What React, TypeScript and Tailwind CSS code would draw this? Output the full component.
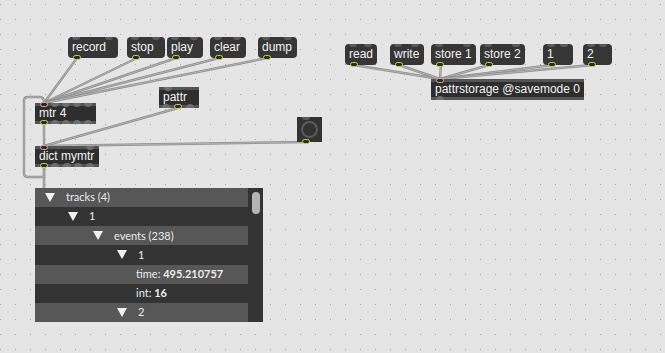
import React from 'react';

const OUT = 'bg-[#2b2b2b] border-[1.5px] border-[#c8d35a]';
const PINK = 'bg-[#2b2b2b] border-[1.5px] border-[#e3a3a0]';

type MsgProps = { x: number; y: number; w: number; label: string };

const Message: React.FC<MsgProps> = ({ x, y, w, label }) => (
  <div
    className="absolute h-[21px] rounded-[4px] bg-[#363636] text-[12px] leading-[21px] text-[#f2f2f2] pl-[4px]"
    style={{ left: x, top: y, width: w, fontFamily: '"Liberation Sans", Arial, sans-serif' }}
  >
    <span className="absolute left-[4px] top-0 w-[8px] h-[3px] rounded-b-[3px] bg-[#5a5a5a]" />
    <span className="absolute right-[5px] top-0 w-[8px] h-[3px] rounded-b-[3px] bg-[#5a5a5a]" />
    {label}
    <span className={`absolute left-[5px] bottom-[-2px] w-[8px] h-[5px] rounded-full ${OUT}`} />
  </div>
);

type ObjProps = {
  x: number;
  y: number;
  w: number;
  label: string;
  inlets: number[];
  outlets: number[];
  pinkIn?: number;
  yellowOut?: number;
};

const ObjBox: React.FC<ObjProps> = ({ x, y, w, label, inlets, outlets, pinkIn = -1, yellowOut = -1 }) => (
  <div
    className="absolute h-[21px] bg-[#2e2e2e] border-t-[3px] border-b-[3px] border-[#545454] text-[12px] leading-[15px] text-[#f2f2f2] pl-[4px]"
    style={{ left: x, top: y, width: w, fontFamily: '"Liberation Sans", Arial, sans-serif' }}
  >
    {inlets.map((p, i) =>
      i === pinkIn ? (
        <span key={'i' + i} className={`absolute top-[-4px] w-[8px] h-[5px] rounded-full ${PINK}`} style={{ left: p - 4 }} />
      ) : (
        <span key={'i' + i} className="absolute top-[-3px] w-[8px] h-[4px] rounded-b-full bg-[#6e6e6e]" style={{ left: p - 4 }} />
      )
    )}
    {label}
    {outlets.map((p, i) =>
      i === yellowOut ? (
        <span key={'o' + i} className={`absolute bottom-[-4px] w-[8px] h-[5px] rounded-full ${OUT}`} style={{ left: p - 4 }} />
      ) : (
        <span key={'o' + i} className="absolute bottom-[-3px] w-[8px] h-[4px] rounded-t-full bg-[#6e6e6e]" style={{ left: p - 4 }} />
      )
    )}
  </div>
);

const Tri: React.FC = () => (
  <svg width="10" height="9" viewBox="0 0 10 9" className="shrink-0">
    <polygon points="0,0 10,0 5,9" fill="#f0f0f0" />
  </svg>
);

const Row: React.FC<{ light: boolean; indent: number; tri?: boolean; children: React.ReactNode }> = ({ light, indent, tri, children }) => (
  <div className={`h-[20px] flex items-center ${light ? 'bg-[#575757]' : 'bg-[#333333]'}`} style={{ paddingLeft: indent }}>
    {tri ? (
      <div className="flex items-center gap-[11px]">
        <Tri />
        <span>{children}</span>
      </div>
    ) : (
      <span>{children}</span>
    )}
  </div>
);

const cords = [
  'M77 58 L44 103',
  'M137 58 L44 103',
  'M176 58 L44 103',
  'M219 58 L44 103',
  'M267 58 L44 103',
  'M44 124 L44 146',
  'M178 108 L44 146',
  'M306 142 L44 146',
  'M44 167 L44 188',
  'M44 167 L44 177 L28 177 Q24 177 24 173 L24 101 Q24 97 28 97 L40 97 Q44 97 44 103',
  'M354 65 L440 79',
  'M399 65 L440 79',
  'M441 65 L440 79',
  'M489 65 L440 79',
  'M552 65 L440 79',
  'M592 65 L440 79',
];

const App: React.FC = () => {
  return (
    <div className="relative w-[665px] h-[353px] overflow-hidden bg-[#e5e5e5]">
      <svg className="absolute inset-0" width="665" height="353">
        <defs>
          <pattern id="dots" width="15" height="15" patternUnits="userSpaceOnUse">
            <rect x="0" y="4" width="1" height="1" fill="#a6a6a6" />
          </pattern>
        </defs>
        <rect width="665" height="353" fill="url(#dots)" />
        {cords.map((d, i) => (
          <g key={i}>
            <path d={d} stroke="#8e8e8e" strokeWidth="2.4" fill="none" />
            <path d={d} stroke="#b3b3b3" strokeWidth="1" fill="none" />
          </g>
        ))}
      </svg>

      <Message x={68} y={37} w={50} label="record" />
      <Message x={127} y={37} w={38} label="stop" />
      <Message x={167} y={37} w={36} label="play" />
      <Message x={210} y={37} w={36} label="clear" />
      <Message x={258} y={37} w={39} label="dump" />

      <Message x={345} y={44} w={32} label="read" />
      <Message x={390} y={44} w={34} label="write" />
      <Message x={431} y={44} w={45} label="store 1" />
      <Message x={480} y={44} w={45} label="store 2" />
      <Message x={543} y={44} w={30} label="1" />
      <Message x={583} y={44} w={29} label="2" />

      <ObjBox x={431} y={79} w={153} label="pattrstorage @savemode 0" inlets={[9]} outlets={[9]} pinkIn={0} />

      <ObjBox x={35} y={103} w={61} label="mtr 4" inlets={[9, 20, 31, 42, 53]} outlets={[9, 20, 31, 42, 53]} pinkIn={0} yellowOut={0} />
      <ObjBox x={159} y={87} w={40} label="pattr" inlets={[9]} outlets={[7, 19, 31]} yellowOut={1} />
      <ObjBox x={35} y={146} w={64} label="dict mymtr" inlets={[9, 55]} outlets={[9, 20, 32, 43, 55]} pinkIn={0} yellowOut={0} />

      <div className="absolute left-[297px] top-[117px] w-[25px] h-[25px] bg-[#333333] flex items-center justify-center">
        <span className="absolute left-[5px] top-0 w-[8px] h-[3px] rounded-b-full bg-[#5a5a5a]" />
        <div className="w-[17px] h-[17px] rounded-full border-[2px] border-[#5c5c5c]" />
        <span className={`absolute left-[5px] bottom-[-2px] w-[8px] h-[5px] rounded-full ${OUT}`} />
      </div>

      <div
        className="absolute left-[35px] top-[188px] w-[228px] h-[134px] bg-[#333333] flex overflow-hidden text-[11px] text-[#ececec]"
        style={{ fontFamily: 'Lato, "Open Sans", sans-serif' }}
      >
        <div className="flex-1 flex flex-col">
          <Row light indent={10} tri>tracks (4)</Row>
          <Row light={false} indent={33} tri>1</Row>
          <Row light indent={58} tri>events (238)</Row>
          <Row light={false} indent={82} tri>1</Row>
          <Row light indent={101}>
            time: <b>495.210757</b>
          </Row>
          <Row light={false} indent={101}>
            int: <b>16</b>
          </Row>
          <Row light indent={82} tri>2</Row>
        </div>
        <div className="w-[15px] bg-[#333333] pt-[4px] pl-[4px]">
          <div className="w-[8px] h-[22px] rounded-full bg-[#b4b4b4]" />
        </div>
      </div>
    </div>
  );
};

export default App;
